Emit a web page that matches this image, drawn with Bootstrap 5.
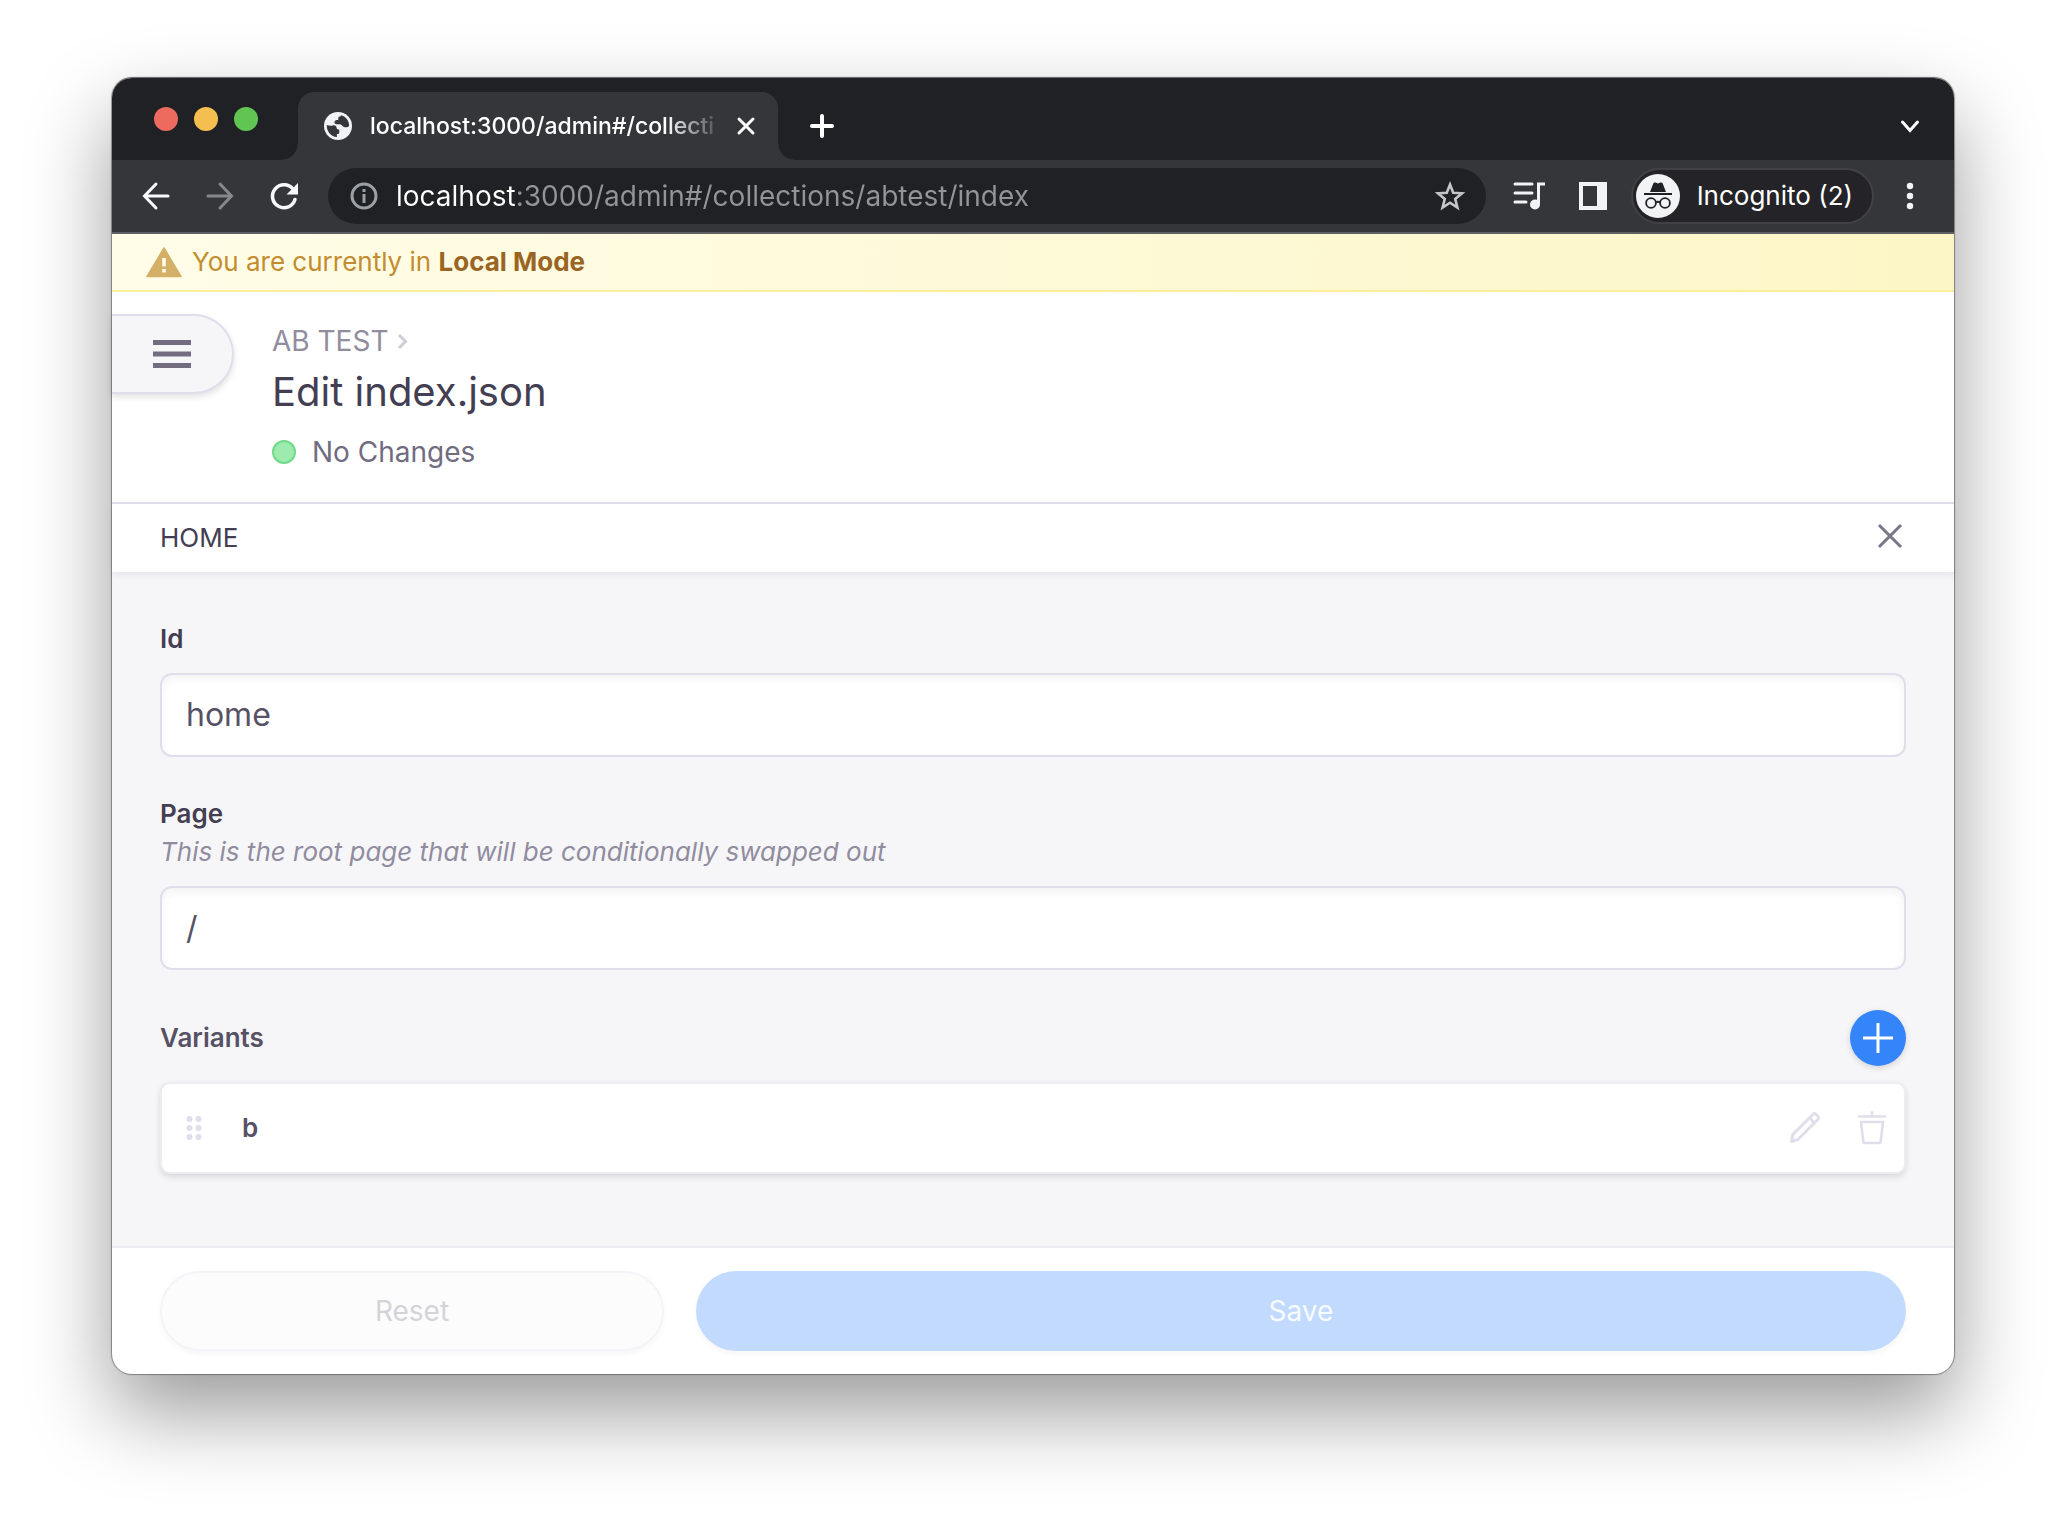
<!DOCTYPE html>
<html lang="en" data-bs-theme="light">
<head>
<meta charset="utf-8">
<meta name="viewport" content="width=device-width, initial-scale=1">
<title>localhost:3000/admin#/collections/abtest/index</title>
<link href="https://cdn.jsdelivr.net/npm/bootstrap@5.3.0/dist/css/bootstrap.min.css" rel="stylesheet">
<style>
  body { font-family: Inter, "Liberation Sans", sans-serif; background: #fff; padding: 78px 112px 148px; line-height: 40px; }
  button { background: none; border: 0; padding: 0; color: inherit; }
  svg { display: block; flex: none; }
  .app-window { border-radius: 20px; box-shadow: 0 0 1px 1px rgba(0,0,0,.35), 0 -1px 1px rgba(0,0,0,.35), 0 38px 84px rgba(0,0,0,.4); background: #fff; }

  /* browser chrome */
  .tab-strip { height: 82px; background: #202124; border-radius: 20px 20px 0 0; color: #fff; }
  .lights { width: 186px; padding: 29px 0 0 42px; gap: 16px; }
  .light { width: 24px; height: 24px; border-radius: 50%; }
  .light-red { background: #ed6a5e; }
  .light-amber { background: #f5bf4f; }
  .light-green { background: #61c554; }
  .tab-item { position: relative; width: 480px; margin-top: 14px; padding: 0 22px 0 26px; background: #35363a; border-radius: 16px 16px 0 0; }
  .tab-item::before, .tab-item::after { content: ""; position: absolute; bottom: 0; width: 16px; height: 16px; }
  .tab-item::before { left: -16px; background: radial-gradient(circle at 0 0, transparent 15px, #35363a 16px); }
  .tab-item::after { right: -16px; background: radial-gradient(circle at 100% 0, transparent 15px, #35363a 16px); }
  .tab-title { font-size: 23px; font-weight: 500; margin-left: 18px; -webkit-mask-image: linear-gradient(90deg, #000 86%, transparent 103%); mask-image: linear-gradient(90deg, #000 86%, transparent 103%); }
  .new-tab { margin: 14px 0 0 32px; }
  .tab-menu { margin: 14px 32px 0 auto; }
  .tool-bar { height: 74px; background: #35363a; border-bottom: 2px solid #5f6063; color: #f1f3f4; padding: 0 32px 0 28px; }
  .nav-tools { gap: 32px; margin-right: 28px; }
  .omnibox { height: 56px; background: #202124; border-radius: 28px; padding: 0 20px; color: #9aa0a6; }
  .omnibox input { font-size: 28px; line-height: 40px; margin-left: 16px; border: 0; outline: 0; padding: 0; min-width: 0;
    color: transparent; background: linear-gradient(90deg, #fff 120px, #929496 120px); -webkit-background-clip: text; background-clip: text; }
  .side-tools { gap: 33px; margin: 0 24px 0 26px; }
  .profile { height: 56px; border: 2px solid #414146; border-radius: 28px; background: #242328; padding: 0 19px 0 3px; gap: 17px; color: #fff; font-size: 26px; margin-right: 24px; }

  /* local mode notice */
  .notice { height: 58px; border-bottom: 2px solid #fdee99; background: linear-gradient(90deg, #fffde8 0%, #fefbe0 25%, #fcf6c6 100%); color: #c38c2e; font-size: 26px; padding: 0 34px; gap: 10px; }
  .notice strong { color: #9a6423; font-weight: 700; }

  /* editor header */
  .editor-head { padding: 0 48px 20px 0; border-bottom: 2px solid #e1deeb; gap: 38px; }
  .menu-toggle { width: 122px; height: 80px; margin-top: 22px; padding-left: 41px; background: #f6f6f9; border: 2px solid #e1deeb; border-left: 0; border-radius: 0 40px 40px 0; box-shadow: 0 3px 6px rgba(0,0,0,.12); }
  .crumbs { font-size: 28px; padding: 29px 0 1px; color: #918c9e; gap: 8px; }
  .crumbs a { color: inherit; text-decoration: none; }
  .page-title { font-size: 40px; line-height: 60px; font-weight: 400; color: #433e52; margin: 0; }
  .status { font-size: 28px; line-height: 60px; color: #716c7f; gap: 16px; }
  .status-dot { width: 24px; height: 24px; border-radius: 50%; background: #9eebb0; border: 2px solid #72d987; }
  .group-bar { position: relative; height: 68px; padding: 0 48px; font-size: 26px; color: #433e52; box-shadow: 0 2px 0 #ebeaf0, 0 4px 6px rgba(0,0,0,.05); }

  /* form */
  .editor-form { background: #f6f6f9; padding: 48px 48px 72px; font-size: 26px; line-height: 38px; }
  .field-block { margin-bottom: 38px; }
  .field-block label { font-weight: 600; color: #433e52; display: block; }
  .hint { font-style: italic; color: #918c9e; }
  .field-input { height: 84px; margin-top: 15px; padding: 0 24px 2px; font-size: 32px; color: #565165; border: 2px solid #e1deeb; border-radius: 12px; box-shadow: inset 0 4px 8px rgba(0,0,0,.05); }
  .list-head { color: #565165; font-weight: 600; margin: 40px 0 16px; }
  .add-btn { width: 56px; height: 56px; border-radius: 50%; background: #3484fa; color: #fff; box-shadow: 0 2px 6px rgba(0,0,0,.14); }
  .variant { height: 92px; background: #fff; border: 2px solid #edecf3; border-radius: 10px; box-shadow: 0 3px 6px rgba(0,0,0,.12); padding: 0 18px 0 24px; color: #e1deeb; }
  .variant-name { color: #565165; font-weight: 600; margin-left: 40px; }
  .variant-tools { gap: 37px; }
  .editor-foot { padding: 23px 48px; border-top: 2px solid #edecf3; gap: 32px; border-radius: 0 0 20px 20px; }
  .pill { height: 80px; border-radius: 40px; font-size: 28px; }
  .pill-reset { flex: 0 0 504px; background: #fcfcfd; border: 2px solid #f4f3f8; color: #d4d3d9; box-shadow: 0 3px 6px rgba(0,0,0,.04); }
  .pill-save { background: #c2dafd; color: #f8fbff; box-shadow: 0 3px 6px rgba(0,0,0,.04); }
</style>
<script src="https://cdn.jsdelivr.net/npm/bootstrap@5.3.0/dist/js/bootstrap.bundle.min.js"></script>
</head>
<body>
<div class="app-window">
  <div class="tab-strip d-flex">
    <div class="lights d-flex align-items-start">
      <span class="light light-red"></span><span class="light light-amber"></span><span class="light light-green"></span>
    </div>
    <div class="tab-item d-flex align-items-center">
      <svg width="28" height="28" viewBox="2 2 20 20"><circle cx="12" cy="12" r="10" fill="#f1f3f4"/><path d="M4 11.200c1.200.6 3 .7 4.300.4 1.500-.3 2.700.5 2.700 1.600 0 1 .8 1.300 1.900 1.300v2c0 1-.6 1.300-1.700 1.300v2.100C7 19.600 4 16 4 12zM14 4.300C17.500 5 20 8.200 20 12c-.8.9-2.500 1.200-3.700.7-1.500-.6-1.600-1.900-3.300-1.900h-1.500c-1.400 0-2-.6-2-1.500s.7-1.600 1.700-1.600h1V6.500c0-1 .6-1.500 1.800-1.500z" fill="#35363a"/></svg>
      <div class="tab-title text-nowrap">localhost:3000/admin#/collecti</div>
      <button class="ms-auto" type="button" aria-label="Close tab"><svg width="20" height="20" viewBox="0 0 20 20" fill="none" stroke="#fff" stroke-width="3" stroke-linecap="round"><path d="M3 3l14 14M17 3L3 17"/></svg></button>
    </div>
    <button class="new-tab" type="button" aria-label="New tab"><svg width="24" height="24" viewBox="0 0 24 24" fill="none" stroke="#fff" stroke-width="4" stroke-linecap="round"><path d="M12 2v20M2 12h20"/></svg></button>
    <button class="tab-menu" type="button" aria-label="Search tabs"><svg width="24" height="24" viewBox="0 0 24 24" fill="none" stroke="#fff" stroke-width="3" stroke-linecap="round"><path d="M4.500 8l7.500 8.500L19.500 8"/></svg></button>
  </div>

  <div class="tool-bar d-flex align-items-center">
    <div class="nav-tools d-flex">
      <button type="button" aria-label="Back"><svg width="32" height="32" viewBox="0 0 32 32" fill="none" stroke="#f8f9fa" stroke-width="3" stroke-linecap="round"><path d="M28 16H5M16 4L4.500 16 16 28"/></svg></button>
      <button type="button" aria-label="Forward"><svg width="32" height="32" viewBox="0 0 32 32" fill="none" stroke="#87888b" stroke-width="3" stroke-linecap="round"><path d="M4 16h23M16 4l11.500 12L16 28"/></svg></button>
      <button type="button" aria-label="Reload"><svg width="32" height="32" viewBox="0 0 32 32"><path d="M27 19.500A11.500 11.500 0 1 1 25 9" fill="none" stroke="#f8f9fa" stroke-width="3.500" stroke-linecap="round"/><path d="M30 3v11.500H18.500z" fill="#f8f9fa"/></svg></button>
    </div>
    <div class="omnibox d-flex align-items-center flex-fill">
      <svg width="32" height="32" viewBox="0 0 32 32"><circle cx="16" cy="16" r="12" fill="none" stroke="#9aa0a6" stroke-width="3"/><path d="M14.500 9h3v3h-3zM14.500 14h3v9h-3z" fill="#9aa0a6"/></svg>
      <input class="flex-fill" type="text" aria-label="Address" value="localhost:3000/admin#/collections/abtest/index">
      <button type="button" aria-label="Bookmark"><svg width="32" height="32" viewBox="0 0 32 32" fill="none" stroke="#c4c6c9" stroke-width="2.600"><path d="M16 4.500l3.200 8.200 8.800.6-6.800 5.600 2.200 8.600L16 22.700l-7.400 4.800 2.200-8.600L4 13.300l8.800-.6z"/></svg></button>
    </div>
    <div class="side-tools d-flex">
      <button type="button" aria-label="Media control"><svg width="34" height="32" viewBox="0 0 34 32" fill="none" stroke="#f1f3f4" stroke-width="3"><path d="M3 4h17M3 13h17M3 22h11" stroke-linecap="round"/><path d="M26.500 24V4h6.500"/><circle cx="23" cy="24.500" r="5" fill="#f1f3f4" stroke="none"/></svg></button>
      <button type="button" aria-label="Side panel"><svg width="28" height="32" viewBox="0 0 28 32"><path fill="#f1f3f4" fill-rule="evenodd" d="M0 2h28v28H0zM4 6v20h14V6z"/></svg></button>
    </div>
    <button class="profile d-flex align-items-center" type="button">
      <svg width="44" height="44" viewBox="0 0 44 44"><circle cx="22" cy="22" r="22" fill="#f1f3f4"/><path d="M14 18l3.300-8.500c.4-1 1.300-1.300 2.200-.9l2.500.9 2.500-.9c.9-.4 1.800 0 2.200.9L30 18z" fill="#202124"/><path d="M8 20h28" stroke="#202124" stroke-width="2"/><g fill="none" stroke="#202124" stroke-width="1.800"><circle cx="15" cy="29" r="4.900"/><circle cx="29" cy="29" r="4.900"/><path d="M20 28.500q2-1.500 4 0"/></g></svg>
      <span>Incognito (2)</span>
    </button>
    <button type="button" aria-label="Browser menu"><svg width="24" height="32" viewBox="0 0 24 32" fill="#f1f3f4"><circle cx="12" cy="6" r="3.200"/><circle cx="12" cy="16" r="3.200"/><circle cx="12" cy="26" r="3.200"/></svg></button>
  </div>

  <div class="notice d-flex align-items-center">
    <svg width="36" height="32" viewBox="0 0 36 32"><path d="M18 2L1 30.500h34z" fill="#d4af68" stroke="#d4af68" stroke-width="1.500" stroke-linejoin="round"/><path d="M16.200 12h3.600v8.500h-3.600zM16.200 23h3.600v3.500h-3.600z" fill="#fffde8"/></svg>
    <div>You are currently in <strong>Local Mode</strong></div>
  </div>

  <header class="editor-head d-flex align-items-start">
    <button class="menu-toggle" type="button" aria-label="Open menu"><svg width="38" height="32" viewBox="0 0 38 32" fill="#716c7f"><path d="M0 2h38v5H0zM0 13.500h38v5H0zM0 25h38v5H0z"/></svg></button>
    <div>
      <nav class="crumbs d-flex align-items-center" aria-label="Breadcrumb"><a href="#">AB TEST</a><svg width="14" height="20" viewBox="0 0 14 20" fill="none" stroke="#cfccd6" stroke-width="3"><path d="M3 4l6.500 6.500L3 17"/></svg></nav>
      <h1 class="page-title">Edit index.json</h1>
      <div class="status d-flex align-items-center"><span class="status-dot"></span>No Changes</div>
    </div>
  </header>

  <div class="group-bar d-flex align-items-center justify-content-between">
    <span>HOME</span>
    <button type="button" aria-label="Close group"><svg width="32" height="32" viewBox="0 0 32 32" fill="none" stroke="#7a7587" stroke-width="3"><path d="M5 3l22 22M27 3L5 25"/></svg></button>
  </div>

  <form>
    <div class="editor-form">
      <div class="field-block">
        <label for="fieldId">Id</label>
        <input class="form-control field-input" id="fieldId" type="text" value="home">
      </div>
      <div class="field-block">
        <label for="fieldPage">Page</label>
        <div class="hint" id="pageHint">This is the root page that will be conditionally swapped out</div>
        <input class="form-control field-input" id="fieldPage" type="text" value="/" aria-describedby="pageHint">
      </div>
      <div class="list-head d-flex align-items-center justify-content-between">
        <span>Variants</span>
        <button class="add-btn d-flex align-items-center justify-content-center" type="button" aria-label="Add variant"><svg width="32" height="32" viewBox="0 0 32 32" fill="none" stroke="#fff" stroke-width="3"><path d="M16 1v30M1 16h30"/></svg></button>
      </div>
      <div class="variant d-flex align-items-center">
        <svg width="16" height="24" viewBox="0 0 16 24" fill="#e1deeb"><circle cx="3.500" cy="3" r="3"/><circle cx="12.500" cy="3" r="3"/><circle cx="3.500" cy="12" r="3"/><circle cx="12.500" cy="12" r="3"/><circle cx="3.500" cy="21" r="3"/><circle cx="12.500" cy="21" r="3"/></svg>
        <span class="variant-name me-auto">b</span>
        <div class="variant-tools d-flex">
          <button type="button" aria-label="Edit variant"><svg width="32" height="34" viewBox="0 0 32 34" fill="none" stroke="#e1deeb" stroke-width="3" stroke-linejoin="round"><path d="M2.500 30.500l1.300-7L23.800 3.500c1-1 2.300-1 3.300 0l1.700 1.700c1 1 1 2.300 0 3.300L9 28.500z"/><path d="M20.500 7l5 5"/></svg></button>
          <button type="button" aria-label="Delete variant"><svg width="28" height="34" viewBox="0 0 28 34" fill="none" stroke="#e1deeb" stroke-width="2.600"><path d="M14 0v6M0 5.500h28"/><path d="M3 11h22l-2.300 19.500c-.1.900-.7 1.500-1.600 1.500H6.900c-.9 0-1.500-.6-1.600-1.500z"/></svg></button>
        </div>
      </div>
    </div>
    <div class="editor-foot d-flex">
      <button class="pill pill-reset" type="reset">Reset</button>
      <button class="pill pill-save flex-fill" type="submit">Save</button>
    </div>
  </form>
</div>
</body>
</html>
